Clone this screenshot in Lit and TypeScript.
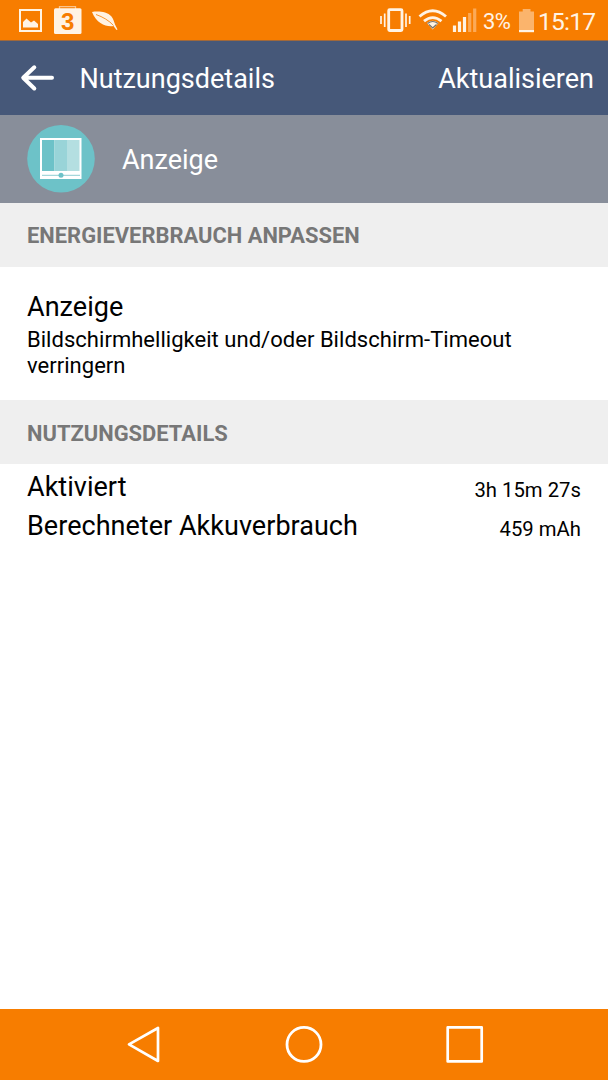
import { LitElement, html, css } from "lit";
import { customElement } from "lit/decorators.js";

@customElement("status-bar")
class StatusBar extends LitElement {
  static styles = css`
    :host { display: flex; height: 41px; box-sizing: border-box; background: #f77d00; border-bottom: 1px solid #a0683a; color: #fff3e4; align-items: flex-start; justify-content: space-between; }
    svg { display: block; flex: none; }
    .left, .right { display: flex; }
    .text { line-height: 43px; white-space: nowrap; }
    .pct { font-size: 22px; width: 32px; margin-left: 5px; letter-spacing: -0.5px; }
    .time { font-size: 24.6px; width: 70px; margin-left: 1px; letter-spacing: -0.8px; }
    .sim { font: 700 24px "Liberation Sans", Roboto, sans-serif; }
  `;
  render() {
    return html`
      <div class="left">
        <svg width="130" height="40" viewBox="0 0 130 40">
          <rect x="20" y="10" width="21" height="21" fill="none" stroke="#fff3e4" stroke-width="2" />
          <path d="M23 27.500V22L26.500 18.500L31 22.500L34 20.500L38 24V27.500Z" fill="#fff3e4" />
          <path d="M59.500 9V6.700H75.500V9" fill="none" stroke="#fbc48c" stroke-width="1.300" />
          <rect x="54" y="8.300" width="27.500" height="25.700" rx="1.500" fill="#fff3e4" />
          <text class="sim" x="67.600" y="29.500" text-anchor="middle" fill="#f77d00">3</text>
          <path d="M92 12C98 11 107 11.500 111.500 16.500C113.500 19 114 22 115 24.500L117.500 29.500L116.500 30L113.500 26C106 27 97 24 92 12Z" fill="#fff3e4" />
          <path d="M96 14.500C103 17 109 20.500 113.500 25.500" fill="none" stroke="#f77d00" stroke-width="0.800" />
        </svg>
      </div>
      <div class="right">
        <svg width="100" height="40" viewBox="378 0 100 40">
          <rect x="388.700" y="9.700" width="13.300" height="20.800" rx="1" fill="none" stroke="#fff3e4" stroke-width="2.800" />
          <path d="M381 16V24M384.700 13.500V27M406 13.500V27M409.700 16V24" stroke="#fff3e4" stroke-width="1.700" fill="none" />
          <path d="M419.500 16.500Q432.700 5 446 16.500M424 21.200Q432.700 14 441.500 21.200" fill="none" stroke="#fff3e4" stroke-width="2.800" />
          <path d="M427 23Q432.700 18.500 438.500 23L432.700 29.500Z" fill="#fff3e4" />
          <path d="M427.500 23.500Q432.700 19.500 438 23.500M429 24.500L432.700 28L436.500 24.500" fill="none" stroke="#75726a" stroke-width="1.200" />
          <path d="M454.500 32V25.500M459.500 32V21.500M464.500 32V17" stroke="#fff3e4" stroke-width="3.200" />
          <path d="M469.700 32V13M474.700 32V8.500" stroke="#fbaa58" stroke-width="3.200" />
        </svg>
        <span class="text pct">3%</span>
        <svg width="22" height="40" viewBox="515 0 22 40">
          <path d="M519 11.500H522.700V9H530.500V11.500H534V30H519Z" fill="#fbb46c" />
          <rect x="519" y="30" width="15" height="2.200" fill="#fff3e4" />
        </svg>
        <span class="text time">15:17</span>
      </div>
    `;
  }
}

@customElement("app-root")
class AppRoot extends LitElement {
  static styles = css`
    :host { display: flex; flex-direction: column; height: 1080px; width: 608px; overflow: hidden; background: #fff; font-family: Roboto, sans-serif; font-size: 27px; color: #000; }
    svg { display: block; flex: none; }
    .bar { flex: none; display: flex; align-items: flex-start; height: 74px; background: #465879; color: #fff; line-height: 76px; }
    .bar svg { margin-right: 25.500px; }
    .bar .action { margin-left: auto; padding-right: 14px; }
    .entry { flex: none; display: flex; height: 88px; background: #888e9a; color: #fff; line-height: 90px; }
    .entry svg { margin: 9px 27px 0 27px; }
    .head { flex: none; height: 64px; box-sizing: border-box; padding-left: 27px; background: #efefef; color: #777; font-size: 21.920px; font-weight: 700; line-height: 66px; }
    .head.usage { line-height: 68px; }
    .tip { flex: none; height: 133px; box-sizing: border-box; padding: 23px 27px 0; }
    .tip .name { line-height: 34px; letter-spacing: 0.050px; }
    .tip .desc { font-size: 22px; line-height: 26px; margin-top: 3px; letter-spacing: 0.030px; }
    .row { flex: none; display: flex; justify-content: space-between; height: 39px; padding: 0 27px; line-height: 46px; letter-spacing: 0.030px; }
    .row .value { font-size: 20.250px; line-height: 52px; }
    .nav { flex: none; margin-top: auto; height: 71px; box-sizing: border-box; display: flex; justify-content: space-between; align-items: center; padding: 0 124px 1px 126px; background: #f77d00; }
  `;

  private rows = [
    ["Aktiviert", "3h 15m 27s"],
    ["Berechneter Akkuverbrauch", "459 mAh"],
  ];

  render() {
    return html`
      <status-bar></status-bar>
      <div class="bar">
        <svg width="54" height="73" viewBox="0 0 54 73">
          <path d="M34.300 26.300L23.200 36.700L34.300 47.500M24 36.700H52" fill="none" stroke="#fff" stroke-width="4" stroke-linecap="round" stroke-linejoin="round" />
        </svg>
        <span class="title">Nutzungsdetails</span>
        <span class="action">Aktualisieren</span>
      </div>
      <div class="entry">
        <svg width="68" height="69" viewBox="0 0 68 69">
          <circle cx="34" cy="34.800" r="33.800" fill="#6dc2c8" />
          <rect x="13" y="14" width="41.500" height="41" fill="#fff" />
          <rect x="15" y="16" width="12.500" height="31" fill="#6dc2c8" />
          <rect x="27.500" y="16" width="12.500" height="31" fill="#99d4d8" />
          <rect x="40" y="16" width="12.500" height="31" fill="#b4dfe1" />
          <path d="M15 51.300H53" stroke="#8fced2" stroke-width="1" />
          <circle cx="34" cy="51.200" r="2.500" fill="#6dc2c8" />
        </svg>
        <span>Anzeige</span>
      </div>
      <div class="head">ENERGIEVERBRAUCH ANPASSEN</div>
      <div class="tip">
        <div class="name">Anzeige</div>
        <div class="desc">Bildschirmhelligkeit und/oder Bildschirm-Timeout verringern</div>
      </div>
      <div class="head usage">NUTZUNGSDETAILS</div>
      ${this.rows.map(
        ([label, value]) => html`<div class="row"><span>${label}</span><span class="value">${value}</span></div>`
      )}
      <div class="nav">
        <svg width="36" height="40" viewBox="0 0 36 40"><path d="M3 20.400L32 4V37Z" fill="none" stroke="#fff" stroke-width="2.700" stroke-linejoin="round" /></svg>
        <svg width="40" height="40" viewBox="0 0 40 40"><circle cx="20" cy="20.400" r="17" fill="none" stroke="#fff" stroke-width="2.800" /></svg>
        <svg width="38" height="40" viewBox="0 0 38 40"><rect x="1.700" y="3.400" width="34" height="34" fill="none" stroke="#fff" stroke-width="2.700" stroke-linejoin="round" /></svg>
      </div>
    `;
  }
}
